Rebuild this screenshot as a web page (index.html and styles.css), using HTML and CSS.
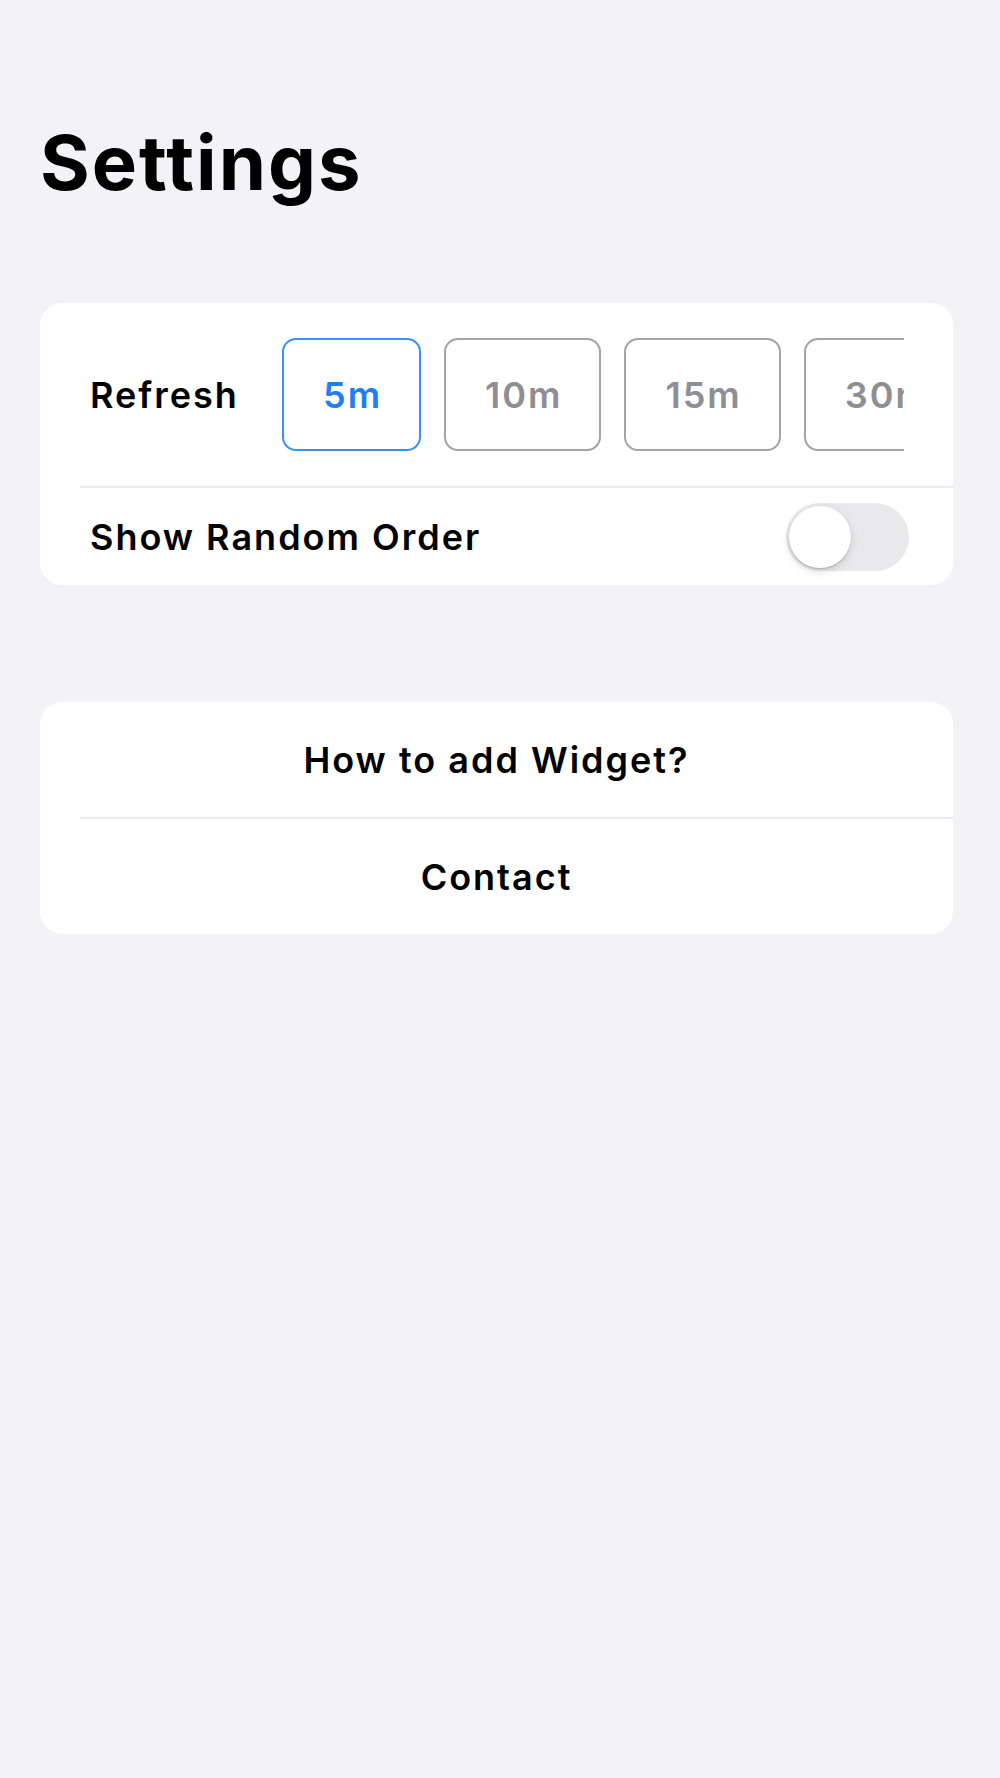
FILE: index.html
```html
<!DOCTYPE html>
<html lang="en">
<head>
<meta charset="utf-8">
<title>Settings</title>
<link rel="stylesheet" href="styles.css">
</head>
<body>
<main class="page">
  <h1 class="title">Settings</h1>

  <section class="card">
    <div class="row row-refresh">
      <span class="label label-refresh">Refresh</span>
      <div class="chips">
        <button class="chip chip-active">5m</button>
        <button class="chip">10m</button>
        <button class="chip">15m</button>
        <button class="chip">30m</button>
      </div>
    </div>
    <div class="sep"></div>
    <div class="row row-toggle">
      <span class="label">Show Random Order</span>
      <span class="toggle"><span class="knob"></span></span>
    </div>
  </section>

  <section class="card card-links">
    <div class="link-row">How to add Widget?</div>
    <div class="sep"></div>
    <div class="link-row">Contact</div>
  </section>
</main>
</body>
</html>
```

FILE: styles.css
```css
html, body {
  margin: 0;
  padding: 0;
  background: #f2f2f7;
}

body {
  font-family: Inter, "Liberation Sans", Arial, sans-serif;
  color: #000;
  min-height: 1778px;
}

.page {
  padding: 124px 47px 0 40px;
}

.title {
  margin: 0 0 103px 0;
  font-size: 76px;
  line-height: 76px;
  font-weight: 700;
  letter-spacing: 2px;
}

.card {
  background: #ffffff;
  border-radius: 22px;
  overflow: hidden;
}

.row {
  display: flex;
  align-items: center;
  padding-left: 50px;
}

.row-refresh {
  height: 183px;
}

.label {
  font-size: 36px;
  font-weight: 600;
  letter-spacing: 2px;
  white-space: nowrap;
}

.label-refresh {
  flex: 0 0 192px;
}

.chips {
  flex: 1;
  display: flex;
  gap: 23px;
  overflow: hidden;
  margin-right: 49px;
}

.chip {
  flex: 0 0 auto;
  height: 113px;
  padding: 0 37px 0 39px;
  border: 2px solid #a3a3a8;
  border-radius: 14px;
  background: #fff;
  color: #8e8e93;
  font-family: inherit;
  font-size: 36px;
  font-weight: 600;
  letter-spacing: 2px;
}

.chip-active {
  border-color: #3a90f7;
  color: #1d80fa;
}

.sep {
  height: 2px;
  background: #ececf0;
  margin-left: 40px;
}

.row-toggle {
  height: 97px;
  justify-content: space-between;
  padding-right: 44px;
}

.toggle {
  position: relative;
  width: 123px;
  height: 68px;
  border-radius: 34px;
  background: #e9e9eb;
}

.knob {
  position: absolute;
  left: 3px;
  top: 3px;
  width: 62px;
  height: 62px;
  border-radius: 50%;
  background: #fff;
  box-shadow: 0 3px 8px rgba(0, 0, 0, 0.15), 0 1px 1px rgba(0, 0, 0, 0.16);
}

.card-links {
  margin-top: 117px;
}

.link-row {
  height: 115px;
  display: flex;
  align-items: center;
  justify-content: center;
  font-size: 36px;
  font-weight: 600;
  letter-spacing: 2px;
}
```
